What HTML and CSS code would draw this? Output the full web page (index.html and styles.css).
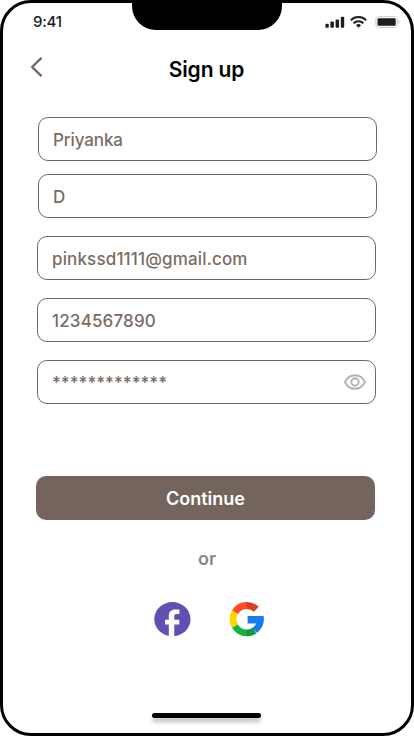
FILE: index.html
```html
<!DOCTYPE html>
<html lang="en">
<head>
<meta charset="utf-8">
<title>Sign up</title>
<link rel="stylesheet" href="styles.css">
</head>
<body>
<main class="phone">
  <div class="notch"></div>
  <div class="status">
    <span class="time">9:41</span>
    <svg class="status-icons" width="76" height="14" viewBox="0 0 76 14">
      <g fill="#1d1d1f">
        <rect x="0.4" y="8.7" width="3.4" height="4" rx="1"/>
        <rect x="5.4" y="6.5" width="3.5" height="6.2" rx="1"/>
        <rect x="10.6" y="4.5" width="3.4" height="8.2" rx="1"/>
        <rect x="15.8" y="1.7" width="3.4" height="11" rx="1"/>
        <path d="M33.500 12.700l-2.500-2.500a3.500 3.500 0 0 1 5 0z"/>
      </g>
      <g fill="none" stroke="#1d1d1f" stroke-width="1.900">
        <path d="M25.800 5.200a11 11 0 0 1 15.400 0"/>
        <path d="M28.600 8.200a7 7 0 0 1 9.800 0"/>
      </g>
      <rect x="50.900" y="1.700" width="21.300" height="10.700" rx="2.800" fill="none" stroke="#c9c9c9"/>
      <rect x="52.500" y="3.300" width="18.200" height="7.500" rx="1.300" fill="#1d1d1f"/>
      <path d="M73.400 5.100c1.800.5 1.800 3.400 0 3.900z" fill="#c9c9c9"/>
    </svg>
  </div>
  <header class="header">
    <svg class="back" width="14" height="20" viewBox="0 0 14 20"><path d="M11.500 .9 2.200 10l9.300 9.100" fill="none" stroke="#73655d" stroke-width="2.300"/></svg>
    <h1>Sign up</h1>
  </header>
  <form class="form">
    <div class="field name">Priyanka</div>
    <div class="field surname">D</div>
    <div class="field email">pinkssd1111@gmail.com</div>
    <div class="field phone-number">1234567890</div>
    <div class="field password"><span>*************</span>
      <svg class="eye" width="22" height="16" viewBox="0 0 22 16" fill="none" stroke="#b9b2ae" stroke-width="1.900"><path d="M1 8C3.100 3.600 6.700 1.200 11 1.200S18.900 3.600 21 8c-2.100 4.400-5.700 6.800-10 6.800S3.100 12.400 1 8z"/><circle cx="11" cy="8" r="3.700"/></svg>
    </div>
    <button class="continue" type="button">Continue</button>
  </form>
  <div class="or">or</div>
  <div class="social">
    <svg width="37" height="36" viewBox="0 0 37 36">
      <ellipse cx="18.400" cy="17.200" rx="18.100" ry="17.100" fill="#6150b3"/>
      <path d="M14.800 34.600V22.600H11v-4.800h3.800v-3.600c0-4.400 2.400-6.600 6.200-6.600h4.400v4.500h-2.800c-1.700 0-2.300.8-2.300 2.400v3.300h5v4.800h-5v12z" fill="#fff"/>
    </svg>
    <svg width="36" height="36" viewBox="0 0 36 36">
      <g fill="none" stroke-width="6.800">
        <path d="M5.980 10.300A13.700 13.700 0 0 1 18 3.500" stroke="#ff4b26"/>
        <path d="M17.500 3.500A13.700 13.700 0 0 1 27.300 7.200" stroke="#d93f21"/>
        <path d="M5.980 24.100A13.700 13.700 0 0 1 5.980 10.300" stroke="#ffd500"/>
        <path d="M18 30.900A13.700 13.700 0 0 1 5.980 24.100" stroke="#14b340"/>
        <path d="M25.500 28.700A13.700 13.700 0 0 1 17.500 30.900" stroke="#0d9e3b"/>
      </g>
      <path d="M18.600 14.100h16c1.100 6.200-1 12.300-6.700 16.700l-5-4.500c2-1.300 3.400-2.500 4.200-4.800h-8.500z" fill="#187deb"/>
    </svg>
  </div>
  <div class="home"></div>
</main>
</body>
</html>
```
FILE: styles.css
```css
* { box-sizing: border-box; }
body { margin: 0; background: #fff; font-family: Inter, sans-serif; }
.phone {
  position: relative;
  display: flex;
  flex-direction: column;
  width: 414px;
  height: 736px;
  border: 3px solid #000;
  border-radius: 31px;
  background: #fff;
  overflow: hidden;
}
.notch {
  position: absolute;
  top: -3px;
  left: 129px;
  width: 150px;
  height: 30px;
  border-radius: 0 0 24px 24px;
  background: #000;
}
.status {
  display: flex;
  justify-content: space-between;
  align-items: center;
  height: 38px;
  padding: 0 10px 0 30px;
}
.time { font-size: 15px; line-height: 18px; font-weight: 500; letter-spacing: -0.2px; color: #1d1d1f; }
.header {
  display: flex;
  align-items: center;
  height: 58px;
  padding: 0 30px 0 27px;
}
.back { margin-bottom: 6px; }
h1 {
  flex: 1;
  margin: 0 12px 0 0;
  text-align: center;
  font-size: 21px;
  line-height: 26px;
  font-weight: 600;
  letter-spacing: -0.1px;
  color: #000;
}
.form { display: flex; flex-direction: column; margin: 18px 0 0 33px; width: 341px; }
.field {
  display: flex;
  align-items: center;
  justify-content: space-between;
  width: 339px;
  height: 44px;
  padding: 1px 9px 0 14px;
  margin-left: 1px;
  border: 1px solid #73655d;
  border-radius: 10px;
  font-size: 17px;
  font-weight: 500;
  color: #7a6c65;
  letter-spacing: 0.15px;
}
.name, .surname { margin-left: 2px; letter-spacing: -0.1px; }
.surname { margin-top: 13px; }
.email, .phone-number, .password { margin-top: 18px; }
.password { letter-spacing: 0; }
.eye { margin-bottom: 2px; }
.continue {
  width: 339px;
  height: 44px;
  margin-top: 72px;
  padding: 1px 0 0;
  border: 0;
  border-radius: 10px;
  background: #73655d;
  color: #fff;
  font: 600 18px Inter, sans-serif;
}
.or {
  margin-top: 28px;
  text-align: center;
  font-size: 18px;
  line-height: 22px;
  font-weight: 600;
  color: #87888b;
}
.social { display: flex; gap: 38px; margin: 32px 0 0 151px; }
.home {
  width: 109px;
  height: 5px;
  margin: 75px 0 0 149px;
  border-radius: 3px;
  background: #000;
  box-shadow: 0 4px 4px rgba(0, 0, 0, 0.25);
}
```
